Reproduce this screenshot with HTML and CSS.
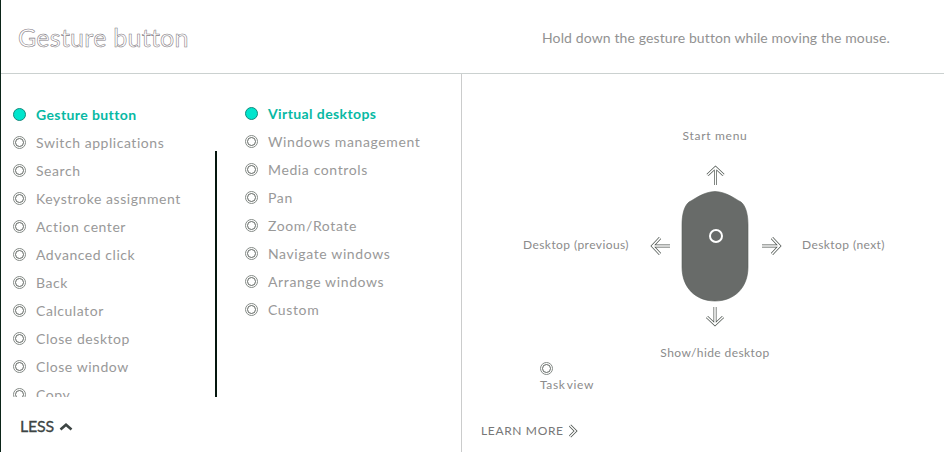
FILE: index.html
```html
<!DOCTYPE html>
<html lang="en">
<head>
<meta charset="utf-8">
<title>Gesture button</title>
<link rel="stylesheet" href="styles.css">
</head>
<body>
<div class="window">
  <header class="header">
    <h1 class="title">Gesture button</h1>
    <p class="hint">Hold down the gesture button while moving the mouse.</p>
  </header>
  <main class="main">
    <section class="options">
      <div class="lists">
        <ul class="list actions">
          <li class="selected"><i class="radio"></i><span>Gesture button</span></li>
          <li><i class="radio"></i><span>Switch applications</span></li>
          <li><i class="radio"></i><span>Search</span></li>
          <li><i class="radio"></i><span>Keystroke assignment</span></li>
          <li><i class="radio"></i><span>Action center</span></li>
          <li><i class="radio"></i><span>Advanced click</span></li>
          <li><i class="radio"></i><span>Back</span></li>
          <li><i class="radio"></i><span>Calculator</span></li>
          <li><i class="radio"></i><span>Close desktop</span></li>
          <li><i class="radio"></i><span>Close window</span></li>
          <li><i class="radio"></i><span>Copy</span></li>
        </ul>
        <div class="scrollbar"></div>
        <ul class="list presets">
          <li class="selected"><i class="radio"></i><span>Virtual desktops</span></li>
          <li><i class="radio"></i><span>Windows management</span></li>
          <li><i class="radio"></i><span>Media controls</span></li>
          <li><i class="radio"></i><span>Pan</span></li>
          <li><i class="radio"></i><span>Zoom/Rotate</span></li>
          <li><i class="radio"></i><span>Navigate windows</span></li>
          <li><i class="radio"></i><span>Arrange windows</span></li>
          <li><i class="radio"></i><span>Custom</span></li>
        </ul>
      </div>
      <a class="less">LESS
        <svg width="14" height="10" viewBox="0 0 14 10"><path d="M1.500 8.500 7 3.700l5.500 4.800" fill="none" stroke="#3d4544" stroke-width="2.600"/></svg>
      </a>
    </section>
    <section class="preview">
      <div class="diagram">
        <span class="label up">Start menu</span>
        <span class="label left">Desktop (previous)</span>
        <svg class="mouse" width="134" height="164" viewBox="648 164 134 164">
          <defs>
            <g id="arrow"><path d="M0 19V2M-8 9 0 1.500 8 9"/></g>
          </defs>
          <path d="M715 191.500C727 192 735 199 741 202C746 206 748 215 748 225V267C748 288 734 301 715 301S682 288 682 267V225C682 215 684 206 689 202C695 199 703 192 715 191.500Z" fill="#686b69" stroke="#555b57" stroke-width=".6"/>
          <circle cx="716" cy="236" r="6" fill="none" stroke="#fff" stroke-width="2"/>
          <g class="arrow-edge"><use href="#arrow" transform="translate(715.500 166)"/><use href="#arrow" transform="translate(715 326) rotate(180)"/><use href="#arrow" transform="translate(651 246) rotate(-90)"/><use href="#arrow" transform="translate(781 246) rotate(90)"/></g>
          <g class="arrow-core"><use href="#arrow" transform="translate(715.500 166)"/><use href="#arrow" transform="translate(715 326) rotate(180)"/><use href="#arrow" transform="translate(651 246) rotate(-90)"/><use href="#arrow" transform="translate(781 246) rotate(90)"/></g>
        </svg>
        <span class="label right">Desktop (next)</span>
        <span class="label down">Show/hide desktop</span>
      </div>
      <div class="task"><i class="radio"></i><span class="label">Task view</span></div>
      <a class="more"><span>LEARN MORE</span>
        <svg width="10" height="14" viewBox="0 0 10 14"><path d="M2 1.500 7.500 7 2 12.500" fill="none" stroke="#505652" stroke-width="3"/><path d="M2 1.500 7.500 7 2 12.500" fill="none" stroke="#fff" stroke-width="1.400"/></svg>
      </a>
    </section>
  </main>
</div>
</body>
</html>
```
FILE: styles.css
```css
*, *::before { box-sizing: border-box; }
body { margin: 0; background: #fff; font-family: Lato, "Liberation Sans", sans-serif; }
.window { width: 944px; height: 452px; border-left: 1px solid #0b2418; overflow: hidden; }
.header { height: 74px; border-bottom: 1px solid #cbd1d0; display: flex; }
.title { margin: 21px 0 0 17px; width: 524px; font-size: 25px; line-height: 32px; font-weight: 400; letter-spacing: .25px; color: #fff; -webkit-text-stroke: .55px #7f7a81; white-space: nowrap; }
.hint { margin: 28px 0 0; font-size: 14px; line-height: 20px; color: #929292; white-space: nowrap; letter-spacing: .12px; }
.main { display: flex; height: 378px; }
.options { width: 461px; border-right: 1px solid #cbcccc; }
.lists { display: flex; height: 323px; overflow: hidden; }
.list { margin: 0; padding: 26px 0 0 12px; list-style: none; width: 214px; font-size: 14px; letter-spacing: .55px; color: #999; }
.list li { display: flex; align-items: center; gap: 10px; height: 28px; white-space: nowrap; }
.list li span { line-height: 20px; position: relative; top: 1px; }
.list.presets { padding: 25px 0 0 28px; letter-spacing: .62px; }
.scrollbar { width: 2px; margin-top: 77px; background: #05160e; flex: none; }
.radio { display: block; flex: none; width: 13px; height: 13px; border-radius: 50%; border: 1px solid #858b87; padding: 1px; }
.radio::before { content: ""; display: block; width: 9px; height: 9px; border-radius: 50%; border: 1px solid #606662; }
.list .radio { position: relative; top: .5px; }
.selected .radio { background: #00e5cd; border-color: #14897c; }
.selected .radio::before { display: none; }
.list .selected { color: #07b9a4; font-weight: 700; letter-spacing: .4px; }
.less { display: flex; gap: 5px; align-items: center; margin: 19px 0 0 19px; font-size: 16px; line-height: 20px; letter-spacing: -.2px; color: #3d4544; -webkit-text-stroke: .3px #3d4544; }
.preview { padding-top: 53px; flex: 1; }
.diagram { display: grid; grid-template-columns: 186px 134px 1fr; grid-template-rows: 37px 164px 34px; }
.label { font-size: 12px; line-height: 18px; letter-spacing: .42px; color: #8b8b8b; white-space: nowrap; }
.up { grid-column: 2; justify-self: center; letter-spacing: .7px; }
.left { grid-column: 1; grid-row: 2; align-self: center; justify-self: end; margin: 0 19px 2px 0; }
.mouse { grid-column: 2; grid-row: 2; display: block; }
.right { grid-column: 3; grid-row: 2; align-self: center; margin: 0 0 2px 20px; }
.down { grid-column: 2; grid-row: 3; justify-self: center; margin-top: 16px; }
.arrow-edge { fill: none; stroke: #4c534e; stroke-width: 3; }
.arrow-core { fill: none; stroke: #fff; stroke-width: 1.6; }
.task { margin: 0 0 0 78px; display: flex; flex-direction: column; gap: 1px; }
.task .label { letter-spacing: .6px; word-spacing: -2px; }
.more { display: flex; align-items: center; gap: 4px; margin: 28px 0 0 19px; font-size: 12px; line-height: 18px; letter-spacing: .65px; color: #777; }
```
